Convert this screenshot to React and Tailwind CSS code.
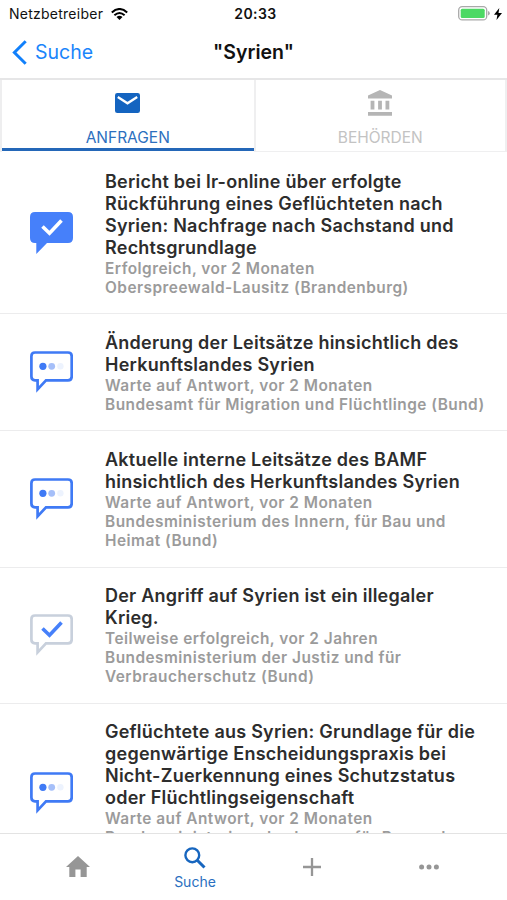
import React from 'react';

const requests = [
  {
    status: 'success',
    title: ['Bericht bei lr-online über erfolgte', 'Rückführung eines Geflüchteten nach', 'Syrien: Nachfrage nach Sachstand und', 'Rechtsgrundlage'],
    meta: ['Erfolgreich, vor 2 Monaten', 'Oberspreewald-Lausitz (Brandenburg)'],
  },
  {
    status: 'waiting',
    title: ['Änderung der Leitsätze hinsichtlich des', 'Herkunftslandes Syrien'],
    meta: ['Warte auf Antwort, vor 2 Monaten', 'Bundesamt für Migration und Flüchtlinge (Bund)'],
  },
  {
    status: 'waiting',
    title: ['Aktuelle interne Leitsätze des BAMF', 'hinsichtlich des Herkunftslandes Syrien'],
    meta: ['Warte auf Antwort, vor 2 Monaten', 'Bundesministerium des Innern, für Bau und', 'Heimat (Bund)'],
  },
  {
    status: 'partial',
    title: ['Der Angriff auf Syrien ist ein illegaler', 'Krieg.'],
    meta: ['Teilweise erfolgreich, vor 2 Jahren', 'Bundesministerium der Justiz und für', 'Verbraucherschutz (Bund)'],
  },
  {
    status: 'waiting',
    title: ['Geflüchtete aus Syrien: Grundlage für die', 'gegenwärtige Enscheidungspraxis bei', 'Nicht-Zuerkennung eines Schutzstatus', 'oder Flüchtlingseigenschaft'],
    meta: ['Warte auf Antwort, vor 2 Monaten', 'Bundesministerium des Innern, für Bau und', 'Heimat (Bund)'],
  },
];

function StatusIcon({ status }) {
  const stroke = status === 'partial' ? '#c8d0dc' : '#3f7af5';
  return (
    <svg className="h-[43px] w-[43px]" viewBox="0 0 43 43" fill="none">
      {status === 'success' ? (
        <path d="M5 0H38Q43 0 43 5V26Q43 31 38 31H17L6.3 42V31H5Q0 31 0 26V5Q0 0 5 0Z" fill="#4680fa" />
      ) : (
        <path d="M5 1.5H38Q41.7 1.5 41.7 5.2V25.5Q41.7 29.3 38 29.3H16L7.6 38.3V29.3H5Q1.4 29.3 1.4 25.5V5.2Q1.4 1.5 5 1.5Z" stroke={stroke} strokeWidth="2.7" />
      )}
      {status === 'waiting' ? (
        <>
          <circle cx="12.9" cy="15.3" r="3.6" fill="#3f7af5" />
          <circle cx="21.7" cy="15.3" r="3.4" fill="#a5bff9" />
          <circle cx="30.4" cy="15.3" r="3.2" fill="#edf3fe" />
        </>
      ) : (
        <path d="M12.5 14.5L19.5 21.3L31.5 8.6" stroke={status === 'success' ? '#fff' : '#4680fa'} strokeWidth="3.6" />
      )}
    </svg>
  );
}

function RequestRow({ item }) {
  return (
    <li className="flex shrink-0 items-center border-b border-[#ececed] pt-[17.6px] pb-[16.6px]">
      <div className="w-[105px] shrink-0 pl-[30px]">
        <StatusIcon status={item.status} />
      </div>
      <div className="whitespace-nowrap font-semibold">
        <h2 className="text-[18px] leading-[22px] tracking-[0.24px] text-[#2d2d2d]">
          {item.title.map((line) => <span key={line} className="block">{line}</span>)}
        </h2>
        <p className="text-[15.4px] leading-[19px] tracking-[0.48px] text-[#9b9b9b]">
          {item.meta.map((line) => <span key={line} className="block">{line}</span>)}
        </p>
      </div>
    </li>
  );
}

function StatusBar() {
  return (
    <div className="grid h-[27px] grid-cols-3 items-center pl-[9px] pr-[5px] text-[14px] text-[#111]">
      <div className="flex items-center gap-2">
        <span className="tracking-[0.25px]">Netzbetreiber</span>
        <svg className="h-3 w-[17px]" viewBox="0 0 17 12" fill="none" stroke="#000" strokeWidth="2">
          <path d="M.8 4.4Q8.5-2.4 16.2 4.4M3.4 7.2Q8.5 2.7 13.6 7.2" />
          <path d="M5.5 9.1Q8.5 6.6 11.5 9.1L8.5 12Z" fill="#000" stroke="none" />
        </svg>
      </div>
      <span className="text-center font-semibold tracking-[0.4px]">20:33</span>
      <div className="flex items-center justify-end gap-1">
        <svg className="h-[15px] w-8" viewBox="0 0 32 15">
          <rect x=".7" y=".7" width="28" height="13.2" rx="3.5" fill="#fff" stroke="#a9a9a9" strokeWidth="1.3" />
          <rect x="2.7" y="2.7" width="24" height="9.2" rx="1.5" fill="#4cd964" />
          <path d="M30 5Q31.8 5.5 31.8 7.3T30 9.6Z" fill="#a9a9a9" />
        </svg>
        <svg className="h-3 w-2" viewBox="0 0 8 12"><path d="M5.3 0L0 6.8H3.4L2.5 12L8 4.9H4.5Z" fill="#000" /></svg>
      </div>
    </div>
  );
}

export default function App() {
  return (
    <div className="flex h-[900px] w-[507px] flex-col overflow-hidden bg-white font-['Inter','Liberation_Sans',sans-serif]">
      <StatusBar />
      <header className="grid h-[51px] grid-cols-3 items-center pl-3 pr-3">
        <button className="flex items-center gap-[8px] text-[19.5px] text-[#1a85fb]">
          <svg className="h-[25px] w-[15px]" viewBox="0 0 15 25" fill="none"><path d="M13.7 1.3L2.4 12.5L13.7 23.7" stroke="#1180fb" strokeWidth="3" /></svg>
          <span className="pt-px">Suche</span>
        </button>
        <h1 className="pt-px text-center text-[19.5px] font-semibold text-[#111]">"Syrien"</h1>
      </header>
      <div className="mb-px grid h-[74px] shrink-0 grid-cols-2 border-t-2 border-[#e6e6e7] text-center text-[15.5px]">
        <div className="flex flex-col border-l-2 border-[#eeeeef] pb-px text-[#2c6fbe]">
          <div className="flex flex-1 flex-col items-center border-b-[3px] border-[#2467b8] pt-[13px]">
            <svg className="h-5 w-[25px]" viewBox="0 0 25 20"><rect width="25" height="20" rx="2.3" fill="#1464c0" /><path d="M2.8 4L12.5 10.3L22.2 4" fill="none" stroke="#fff" strokeWidth="2.3" /></svg>
            <span className="-mb-1 mt-[13px] leading-6">ANFRAGEN</span>
          </div>
        </div>
        <div className="flex flex-col items-center border-x-2 border-b border-[#efeff0] pt-[10px] text-[#c3c3c3]">
          <svg className="h-[26px] w-6 shrink-0" viewBox="0 0 24 26" fill="#b5b5b5"><path d="M12 0L24 5.5V8.5H0V5.5ZM2.6 10.7H6.4V19.5H2.6ZM10.1 10.7H13.9V19.5H10.1ZM17.5 10.7H21.3V19.5H17.5ZM0 22H24V25.7H0Z" /></svg>
          <span className="-mb-1 mt-[10px] leading-6">BEHÖRDEN</span>
        </div>
      </div>
      <ul className="flex min-h-0 flex-1 flex-col overflow-hidden">
        {requests.map((item) => <RequestRow key={item.title[0]} item={item} />)}
      </ul>
      <nav className="grid h-[67px] shrink-0 grid-cols-[117px_117px_117px_117px] justify-center border-t border-[#e3e3e3] bg-white text-[#969696]">
        <div className="flex justify-center pt-[22px]">
          <svg className="h-[21px] w-6" viewBox="0 0 24 21" fill="#969696"><path d="M12 0L24 11H20.7V21H14.6V13.5H9.4V21H3.3V11H0Z" /></svg>
        </div>
        <div className="flex flex-col items-center pt-[13px] text-[#2a6fc0]">
          <svg className="h-[22px] w-[22px]" viewBox="0 0 22 22" fill="none" stroke="#1766bf"><circle cx="8.3" cy="8.3" r="6.9" strokeWidth="2.4" /><path d="M13 13L20.5 20.5" strokeWidth="3" /></svg>
          <span className="mt-[3px] text-[14px] leading-5">Suche</span>
        </div>
        <div className="flex justify-center pt-[24px]">
          <svg className="h-[18px] w-[18px]" viewBox="0 0 18 18"><path d="M9 0V18M0 9H18" stroke="#969696" strokeWidth="2.3" /></svg>
        </div>
        <div className="flex justify-center pt-[30px]">
          <svg className="h-[6px] w-5" viewBox="0 0 20 6" fill="#969696"><circle cx="2.6" cy="3" r="2.5" /><circle cx="10" cy="3" r="2.5" /><circle cx="17.4" cy="3" r="2.5" /></svg>
        </div>
      </nav>
    </div>
  );
}
